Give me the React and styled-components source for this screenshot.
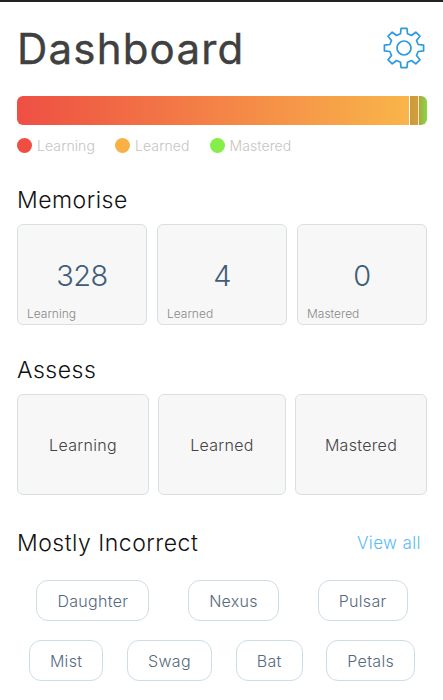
import React from 'react';
import styled, { createGlobalStyle } from 'styled-components';

const GlobalStyle = createGlobalStyle`
  html, body {
    margin: 0;
    padding: 0;
    background: #fff;
  }
  body {
    font-family: Inter, "Liberation Sans", sans-serif;
  }
`;

const memorise = [
  { count: 328, label: 'Learning' },
  { count: 4, label: 'Learned' },
  { count: 0, label: 'Mastered' }
];

const legend = [
  { label: 'Learning', color: '#f04e43' },
  { label: 'Learned', color: '#f9b146' },
  { label: 'Mastered', color: '#85ee48' }
];

const assess = ['Learning', 'Learned', 'Mastered'];

const wordRows = [
  ['Daughter', 'Nexus', 'Pulsar'],
  ['Mist', 'Swag', 'Bat', 'Petals']
];

// eight teeth, one pointing straight up
const gearPath = () => {
  const point = (deg, r) => {
    const rad = ((deg - 90) * Math.PI) / 180;
    return `${(21 + r * Math.cos(rad)).toFixed(2)} ${(21 + r * Math.sin(rad)).toFixed(2)}`;
  };
  const parts = [];
  for (let i = 0; i < 8; i++) {
    const a = i * 45;
    parts.push(point(a - 14, 14.6), point(a - 8.5, 19.8), point(a + 8.5, 19.8), point(a + 14, 14.6));
  }
  return `M${parts.join('L')}Z`;
};

const App = () => {
  return (
    <Page>
      <GlobalStyle />
      <Header>
        <Title>Dashboard</Title>
        <Gear viewBox="0 0 42 42">
          <path d={gearPath()} />
          <circle cx="21" cy="21" r="7" />
        </Gear>
      </Header>

      <ProgressBar>
        <LearningSegment />
        <LearnedSegment />
        <MasteredSegment />
      </ProgressBar>
      <Legend>
        {legend.map((item) => (
          <LegendItem key={item.label}>
            <Dot $color={item.color} />
            {item.label}
          </LegendItem>
        ))}
      </Legend>

      <Heading>Memorise</Heading>
      <MemoriseGrid>
        {memorise.map((item) => (
          <MemoriseCard key={item.label}>
            <Count>{item.count}</Count>
            <CardLabel>{item.label}</CardLabel>
          </MemoriseCard>
        ))}
      </MemoriseGrid>

      <AssessHeading>Assess</AssessHeading>
      <AssessGrid>
        {assess.map((label) => (
          <AssessCard key={label}>{label}</AssessCard>
        ))}
      </AssessGrid>

      <SectionRow>
        <Heading as="h2">Mostly Incorrect</Heading>
        <ViewAll href="#">View all</ViewAll>
      </SectionRow>
      <Words>
        {wordRows.map((row) => (
          <WordRow key={row[0]}>
            {row.map((word) => (
              <Word key={word}>{word}</Word>
            ))}
          </WordRow>
        ))}
      </Words>
    </Page>
  );
};

export default App;

const Page = styled.div`
  width: 443px;
  height: 700px;
  box-sizing: border-box;
  padding: 0 16px 0 17px;
  border-top: 2px solid #222;
  overflow: hidden;
`;

const Header = styled.header`
  display: flex;
  justify-content: space-between;
  align-items: center;
  height: 94px;
  padding-right: 2px;
`;

const Title = styled.h1`
  margin: 0;
  font-size: 42px;
  line-height: 50px;
  font-weight: 400;
  letter-spacing: 1.2px;
  -webkit-text-stroke: 0.4px #404040;
  color: #404040;
`;

const Gear = styled.svg`
  width: 42px;
  height: 42px;
  margin-bottom: 3px;
  fill: none;
  stroke: #2b9ade;
  stroke-width: 1.7;
  stroke-linejoin: round;
`;

const ProgressBar = styled.div`
  display: flex;
  height: 29px;
  border-radius: 6px;
  overflow: hidden;
`;

const LearningSegment = styled.div`
  flex: 1;
  background: linear-gradient(90deg, #ee4f43, #f9b54a);
`;

const LearnedSegment = styled.div`
  width: 8px;
  margin-left: 1px;
  border-right: 1px solid #f3e6c8;
  background: linear-gradient(90deg, #c99a3c, #d69c3a);
`;

const MasteredSegment = styled.div`
  width: 8px;
  background: linear-gradient(90deg, #a8a93f, #86d944);
`;

const Legend = styled.div`
  display: flex;
  gap: 20px;
  margin-top: 13px;
`;

const LegendItem = styled.div`
  display: flex;
  align-items: center;
  gap: 5px;
  font-size: 14px;
  line-height: 15px;
  font-weight: 300;
  letter-spacing: 0.1px;
  color: #c4c4c4;
`;

const Dot = styled.span`
  width: 15px;
  height: 15px;
  border-radius: 50%;
  background: ${(props) => props.$color};
`;

const Heading = styled.h2`
  margin: 32px 0 0;
  font-size: 23px;
  line-height: 30px;
  font-weight: 300;
  letter-spacing: 0.5px;
  color: #111;
`;

const AssessHeading = styled(Heading)`
  margin-top: 30px;
`;

const MemoriseGrid = styled.div`
  display: grid;
  grid-template-columns: repeat(3, 130px);
  gap: 10px;
  margin-top: 9px;
`;

const Card = styled.div`
  box-sizing: border-box;
  height: 101px;
  background: #f7f7f7;
  border: 1px solid #d8e0e4;
  border-radius: 6px;
`;

const MemoriseCard = styled(Card)`
  display: flex;
  flex-direction: column;
  padding: 0 9px 3px;
`;

const Count = styled.div`
  flex: 1;
  display: flex;
  align-items: center;
  justify-content: center;
  padding-top: 19px;
  font-size: 29px;
  font-weight: 300;
  letter-spacing: -0.6px;
  color: #3f5d78;
`;

const CardLabel = styled.div`
  font-size: 12px;
  line-height: 15px;
  font-weight: 300;
  color: #888;
`;

const AssessGrid = styled.div`
  display: grid;
  grid-template-columns: 132px 128px 132px;
  gap: 9px;
  margin-top: 9px;
`;

const AssessCard = styled(Card)`
  display: flex;
  align-items: center;
  justify-content: center;
  font-size: 16px;
  font-weight: 300;
  letter-spacing: 0.3px;
  color: #444;
`;

const SectionRow = styled.div`
  display: flex;
  justify-content: space-between;
  align-items: center;
  padding-right: 6px;
  margin-top: 33px;

  h2 {
    margin: 0;
  }
`;

const ViewAll = styled.a`
  font-size: 17px;
  font-weight: 300;
  letter-spacing: 0.4px;
  color: #5cbcf5;
  text-decoration: none;
`;

const Words = styled.div`
  display: flex;
  flex-direction: column;
  gap: 19px;
  margin-top: 22px;
`;

const WordRow = styled.div`
  display: flex;
  justify-content: space-around;
`;

const Word = styled.div`
  box-sizing: border-box;
  height: 41px;
  padding: 0 20px;
  display: flex;
  align-items: center;
  border: 1.5px solid #cddce5;
  border-radius: 12px;
  font-size: 16px;
  font-weight: 300;
  letter-spacing: 0.3px;
  color: #566a80;
`;
